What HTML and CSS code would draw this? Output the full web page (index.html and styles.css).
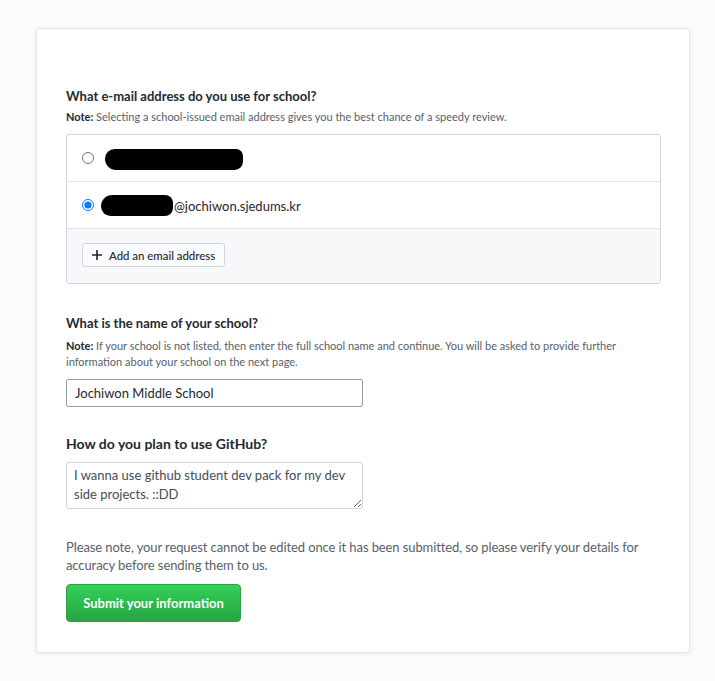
FILE: index.html
```html
<!DOCTYPE html>
<html lang="en">
<head>
<meta charset="utf-8">
<title>Student benefits application</title>
<link rel="stylesheet" href="styles.css">
</head>
<body>
<div class="card">
  <form class="form">
    <h2 class="q q-first">What e-mail address do you use for school?</h2>
    <p class="note"><strong>Note:</strong> Selecting a school-issued email address gives you the best chance of a speedy review.</p>
    <div class="email-box">
      <label class="email-row">
        <input type="radio" name="email" class="radio">
        <span class="blob blob-one"></span>
      </label>
      <label class="email-row">
        <input type="radio" name="email" class="radio" checked>
        <span class="blob blob-two"></span><span class="email-domain">@jochiwon.sjedums.kr</span>
      </label>
      <div class="email-footer">
        <button type="button" class="btn-add">
          <svg class="plus" viewBox="0 0 12 16" width="10" height="14" aria-hidden="true"><path d="M12 9H7v5H5V9H0V7h5V2h2v5h5v2z"/></svg>
          Add an email address
        </button>
      </div>
    </div>

    <h2 class="q q-school">What is the name of your school?</h2>
    <p class="note note-two"><span class="line"><strong>Note:</strong> If your school is not listed, then enter the full school name and continue. You will be asked to provide further</span><span class="line">information about your school on the next page.</span></p>
    <input class="field" type="text" value="Jochiwon Middle School">

    <h2 class="q q-plan">How do you plan to use GitHub?</h2>
    <textarea class="area">I wanna use github student dev pack for my dev side projects. ::DD</textarea>

    <p class="final-note">Please note, your request cannot be edited once it has been submitted, so please verify your details for accuracy before sending them to us.</p>
    <button type="button" class="btn-submit">Submit your information</button>
  </form>
</div>
</body>
</html>
```

FILE: styles.css
```css
* { box-sizing: border-box; }

html, body {
  margin: 0;
  padding: 0;
  background: #fafbfc;
}

body {
  font-family: "Lato", "Open Sans", sans-serif;
  color: #24292e;
  padding: 28px 25px 28px 36px;
}

.card {
  width: 654px;
  background: #fff;
  border: 1px solid #e1e4e8;
  border-radius: 3px;
  box-shadow: 0 1px 4px rgba(27, 31, 35, 0.08);
  padding: 57px 29px 30px 29px;
}

.form {
  display: flex;
  flex-direction: column;
  align-items: flex-start;
}

.q {
  margin: 0;
  font-size: 13px;
  line-height: 20px;
  font-weight: 700;
  color: #24292e;
}

.q-school { margin-top: 29px; }
.q-plan { margin-top: 27px; font-size: 14px; }

.note {
  margin: 3px 0 0;
  font-size: 11px;
  line-height: 16px;
  color: #586069;
}

.note strong { color: #24292e; font-weight: 700; }

.note-two { margin-top: 5px; width: 580px; }

.line { display: block; white-space: nowrap; }

.email-box {
  margin-top: 9px;
  width: 595px;
  border: 1px solid #d1d5da;
  border-radius: 3px;
  overflow: hidden;
}

.email-row {
  display: flex;
  align-items: center;
  height: 47px;
  padding-left: 15px;
  border-bottom: 1px solid #e1e4e8;
  font-size: 13px;
  color: #24292e;
}

.radio {
  margin: 0 11px 0 0;
  width: 12px;
  height: 12px;
  accent-color: #0b7bfe;
}

.blob {
  display: inline-block;
  background: #000;
}

.blob-one {
  width: 138px;
  height: 21px;
  border-radius: 14px 10px 12px 16px;
  margin-top: 2px;
}

.blob-two {
  width: 72px;
  height: 21px;
  margin-left: -4px;
  border-radius: 14px 10px 10px 12px;
}

.email-domain {
  margin-left: 1px;
  margin-top: 1px;
}

.email-footer {
  background: #f6f8fa;
  height: 54px;
  padding: 14px 15px;
}

.btn-add {
  display: inline-flex;
  align-items: center;
  gap: 7px;
  height: 24px;
  padding: 0 9px 0 9px;
  font-family: inherit;
  font-size: 11.4px;
  font-weight: 500;
  color: #24292e;
  background: #fafbfc;
  border: 1px solid #d1d5da;
  border-radius: 3px;
}

.plus { fill: #24292e; }

.field {
  margin-top: 9px;
  width: 297px;
  height: 28px;
  padding: 0 8px;
  font-family: inherit;
  font-size: 13px;
  color: #24292e;
  border: 1px solid #959da5;
  border-radius: 2px;
  background: #fff;
}

.area {
  margin-top: 8px;
  width: 297px;
  height: 47px;
  padding: 3px 7px;
  font-family: inherit;
  font-size: 13px;
  line-height: 19px;
  color: #444d56;
  border: 1px solid #d1d5da;
  border-radius: 3px;
  resize: vertical;
  overflow: hidden;
}

.final-note {
  margin: 29px 0 0;
  width: 600px;
  font-size: 13px;
  letter-spacing: -0.1px;
  line-height: 18px;
  color: #586069;
}

.btn-submit {
  margin-top: 10px;
  width: 175px;
  height: 38px;
  font-family: inherit;
  font-size: 13px;
  font-weight: 700;
  color: #fff;
  background: linear-gradient(#34d058, #28a745 90%);
  border: 1px solid #2a9f47;
  border-radius: 4px;
}
```
